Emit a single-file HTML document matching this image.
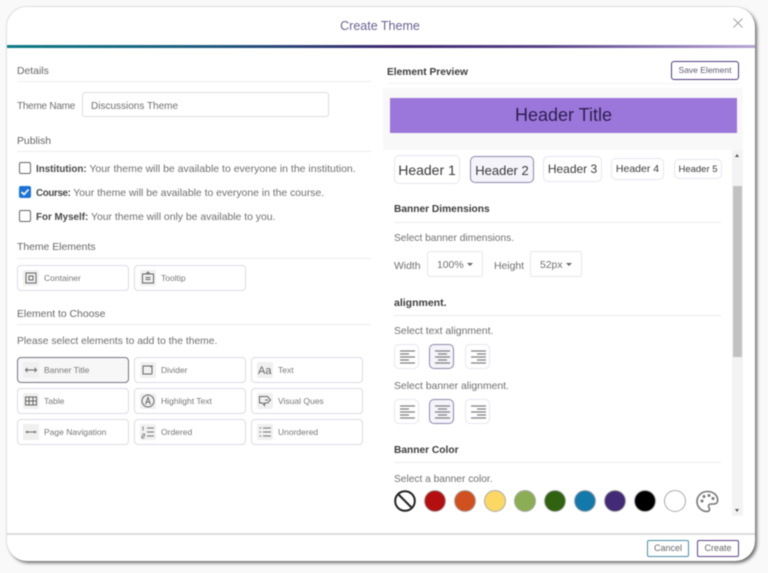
<!DOCTYPE html>
<html><head><meta charset="utf-8">
<style>
html,body{margin:0;padding:0;width:768px;height:573px;overflow:hidden;background:#f9f9f9;font-family:"Liberation Sans",sans-serif}
#wrap{position:absolute;left:0;top:0;width:768px;height:573px;filter:blur(.45px)}
#m{position:absolute;left:7px;top:7px;width:748px;height:554px;background:#fff;border-radius:20px;box-shadow:2px 2px 3px #6a6a6a,-1px -1px 1px #e6e6e6}
.a{position:absolute}
.t{position:absolute;white-space:nowrap;font-size:10.4px;line-height:14px;margin-top:2px;color:#6f6f6f}
.t b{font-size:9.8px;color:#484848}
.h{color:#666}
.b{font-weight:bold;color:#3c3c3c;font-size:10.2px}
.l{position:absolute;height:1px;background:#ececec}
.btn{position:absolute;box-sizing:border-box;width:112px;height:26px;border:1px solid #dcdbe6;border-radius:4px;background:#fff}
.btn .ic{position:absolute;left:5px;top:4px;width:16px;height:16px;background:#f0f0f0;border-radius:2px}
.btn .ic svg{display:block}
.btn span{position:absolute;left:26px;top:6px;font-size:8.5px;line-height:12px;color:#777;white-space:nowrap}
.hb{position:absolute;box-sizing:border-box;border:1px solid #e6e5ef;border-radius:5px;background:#fff;text-align:center;color:#3a3a3a;white-space:nowrap}
.al{position:absolute;box-sizing:border-box;width:25px;height:25px;border:1px solid #e6e5ef;border-radius:5px;background:#fff}
.al.s{background:#f4f4fa;border-color:#8d88ac}
.al svg{position:absolute;left:5px;top:4px}
.al path{stroke:#808080;stroke-width:1.3;fill:none}
.c{position:absolute;top:490px;width:22px;height:22px;border-radius:50%;box-sizing:border-box;border:1px solid #aaa}
.cb{position:absolute;left:19px;width:12px;height:12px;box-sizing:border-box;border:1.5px solid #666;border-radius:2px;background:#fff}
.sel{position:absolute;box-sizing:border-box;top:251px;height:26px;border:1px solid #e6e6e6;border-radius:3px;font-size:10.4px;line-height:27px;color:#6f6f6f;padding-left:9px}
.sel i{position:absolute;right:9px;top:11px;width:0;height:0;border-left:3.5px solid transparent;border-right:3.5px solid transparent;border-top:3.5px solid #666}
</style></head>
<body><div id="wrap">
<div id="m"></div>
<div class="t" style="left:280px;width:200px;text-align:center;top:16px;font-size:12.5px;line-height:16px;color:#6a6190">Create Theme</div>
<svg class="a" style="left:732px;top:17px" width="12" height="12"><path d="M1.5 1.5l9 9M10.5 1.5l-9 9" stroke="#a8a8a8" stroke-width="1.1" fill="none"/></svg>
<div class="a" style="left:7px;top:45px;width:748px;height:3px;background:linear-gradient(90deg,#0e7c86 0%,#1c5f80 25%,#3f2a70 52%,#5a4488 72%,#b9a6d6 100%)"></div>

<div class="t h" style="left:17px;top:63px">Details</div><div class="l" style="left:17px;top:81px;width:354px"></div>
<div class="t" style="left:17px;top:98px;font-size:10px;letter-spacing:-.25px">Theme Name</div>
<div class="a" style="left:82px;top:92px;width:247px;height:25px;box-sizing:border-box;border:1px solid #ddd;border-radius:3px"></div>
<div class="t" style="left:91px;top:98px;font-size:10px">Discussions Theme</div>
<div class="t h" style="left:17px;top:133px">Publish</div><div class="l" style="left:17px;top:151px;width:354px"></div>
<div class="cb" style="top:162px"></div>
<div class="t" style="left:36px;top:160px;font-size:10.5px"><b>Institution:</b> Your theme will be available to everyone in the institution.</div>
<div class="cb" style="top:186px;background:#1a73d8;border-color:#1a73d8"><svg class="a" style="left:-1px;top:-1px" width="12" height="12"><path d="M2.5 6l2.5 2.5 4.5-5" stroke="#fff" stroke-width="1.6" fill="none"/></svg></div>
<div class="t" style="left:36px;top:185px"><b style="letter-spacing:-.35px">Course:</b> Your theme will be available to everyone in the course.</div>
<div class="cb" style="top:210px"></div>
<div class="t" style="left:36px;top:209px"><b>For Myself:</b> Your theme will only be available to you.</div>
<div class="t h" style="left:17px;top:239px">Theme Elements</div><div class="l" style="left:17px;top:258px;width:354px"></div>

<div class="btn" style="left:17px;top:265px"><div class="ic"><svg width="16" height="16"><rect x="3" y="3" width="10" height="10" fill="none" stroke="#666"/><rect x="6" y="6" width="4" height="4" fill="none" stroke="#666"/></svg></div><span>Container</span></div>
<div class="btn" style="left:134px;top:265px"><div class="ic"><svg width="16" height="16"><rect x="2.5" y="4" width="11" height="9" fill="none" stroke="#666"/><path d="M6 4l2-2 2 2M5.500 7.500h5M5.500 9.500h5" stroke="#666" fill="none"/></svg></div><span>Tooltip</span></div>

<div class="t h" style="left:17px;top:306px">Element to Choose</div><div class="l" style="left:17px;top:324px;width:354px"></div>
<div class="t" style="left:17px;top:333px;font-size:10.3px">Please select elements to add to the theme.</div>

<div class="btn" style="left:17px;top:357px;border-color:#77757f;background:#f7f7f7"><div class="ic"><svg width="16" height="16"><path d="M2.500 8h11M4.500 6l-2 2 2 2M11.500 6l2 2-2 2" stroke="#666" fill="none" stroke-width=".9"/></svg></div><span>Banner Title</span></div>
<div class="btn" style="left:134px;top:357px"><div class="ic"><svg width="16" height="16"><path d="M13 4H3v8h9M10 4l2 1.500V12" stroke="#666" fill="none"/></svg></div><span>Divider</span></div>
<div class="btn" style="left:251px;top:357px"><div class="ic"><svg width="16" height="16"><text x="1" y="12" font-size="11" fill="#666" font-family="Liberation Sans">Aa</text></svg></div><span>Text</span></div>

<div class="btn" style="left:17px;top:388px"><div class="ic"><svg width="16" height="16"><path d="M2.500 4h11v8h-11zM2.500 8h11M6 4v8M10 4v8" stroke="#666" fill="none"/></svg></div><span>Table</span></div>
<div class="btn" style="left:134px;top:388px"><div class="ic"><svg width="16" height="16"><circle cx="8" cy="8" r="6" stroke="#666" fill="none"/><path d="M5.500 11.500L8 4.500l2.500 7M6.500 9h3" stroke="#666" fill="none"/></svg></div><span>Highlight Text</span></div>
<div class="btn" style="left:251px;top:388px"><div class="ic"><svg width="16" height="16"><path d="M2.500 3.500h8l3 3.500-3 3h-3v2.500l-2-2.500h-3zM8 7h3" stroke="#666" fill="none"/></svg></div><span>Visual Ques</span></div>

<div class="btn" style="left:17px;top:419px"><div class="ic"><svg width="16" height="16"><path d="M3 8h10M5 7l-2 1 2 1M11 7l2 1-2 1" stroke="#777" fill="none" stroke-width=".9"/></svg></div><span>Page Navigation</span></div>
<div class="btn" style="left:134px;top:419px"><div class="ic"><svg width="16" height="16"><path d="M7 4h7M7 8h7M7 12h7" stroke="#777" fill="none"/><path d="M3 2.500v4M2 10h2.500v2H2v2h2.500" stroke="#666" fill="none" stroke-width=".8"/></svg></div><span>Ordered</span></div>
<div class="btn" style="left:251px;top:419px"><div class="ic"><svg width="16" height="16"><path d="M6 4h8M6 8h8M6 12h8M2.500 4h1.500M2.500 8h1.500M2.500 12h1.500" stroke="#777" fill="none"/></svg></div><span>Unordered</span></div>

<div class="t b" style="left:387px;top:64px">Element Preview</div>
<div class="a" style="left:671px;top:61px;width:68px;height:19px;box-sizing:border-box;border:1.5px solid #4b3a7e;border-radius:3px;text-align:center;font-size:8.5px;line-height:16px;color:#5e5a70;white-space:nowrap">Save Element</div>
<div class="l" style="left:387px;top:83px;width:352px;background:#f3f3f3"></div>
<div class="a" style="left:383px;top:88px;width:360px;height:62px;background:#f8f8f8"></div>
<div class="a" style="left:390px;top:98px;width:347px;height:35px;background:#9c77db"></div>
<div class="t" style="left:390px;width:347px;text-align:center;top:101px;font-size:18px;line-height:24px;color:#2c1f4f">Header Title</div>

<div class="a" style="left:732px;top:150px;width:11px;height:366px;background:#f3f3f3"></div>
<div class="a" style="left:733px;top:186px;width:9px;height:171px;background:#c1c1c1"></div>
<div class="a" style="left:735px;top:154px;width:0;height:0;border-left:2.5px solid transparent;border-right:2.5px solid transparent;border-bottom:3px solid #555"></div>
<div class="a" style="left:735px;top:509px;width:0;height:0;border-left:2.5px solid transparent;border-right:2.5px solid transparent;border-top:3px solid #555"></div>

<div class="hb" style="left:394px;top:155px;width:66px;height:29px;font-size:14px;line-height:29px">Header 1</div>
<div class="hb" style="left:470px;top:156px;width:64px;height:27px;font-size:13px;line-height:28px;background:#f4f4fa;border-color:#8d88ac">Header 2</div>
<div class="hb" style="left:543px;top:156px;width:59px;height:26px;font-size:12px;line-height:24px">Header 3</div>
<div class="hb" style="left:611px;top:158px;width:53px;height:22px;font-size:10.5px;line-height:21px">Header 4</div>
<div class="hb" style="left:674px;top:159px;width:48px;height:20px;font-size:9.5px;line-height:19px">Header 5</div>

<div class="t b" style="left:394px;top:201px">Banner Dimensions</div><div class="l" style="left:394px;top:222px;width:327px"></div>
<div class="t" style="left:394px;top:230px;font-size:10.2px">Select banner dimensions.</div>
<div class="t" style="left:394px;top:258px">Width</div>
<div class="sel" style="left:427px;width:56px">100%<i></i></div>
<div class="t" style="left:494px;top:258px">Height</div>
<div class="sel" style="left:530px;width:52px">52px<i></i></div>
<div class="t b" style="left:394px;top:294px;font-size:10.5px">alignment.</div><div class="l" style="left:394px;top:315px;width:327px"></div>
<div class="t" style="left:394px;top:323px">Select text alignment.</div>

<div class="al" style="left:394px;top:344px"><svg width="15" height="16"><path d="M0 2h15M0 5h9M0 8h15M0 11h9M0 14h15"/></svg></div>
<div class="al s" style="left:429px;top:344px"><svg width="15" height="16"><path d="M0 2h15M3 5h9M0 8h15M3 11h9M0 14h15"/></svg></div>
<div class="al" style="left:465px;top:344px"><svg width="15" height="16"><path d="M0 2h15M6 5h9M0 8h15M6 11h9M0 14h15"/></svg></div>
<div class="t" style="left:394px;top:378px">Select banner alignment.</div>
<div class="al" style="left:394px;top:399px"><svg width="15" height="16"><path d="M0 2h15M0 5h9M0 8h15M0 11h9M0 14h15"/></svg></div>
<div class="al s" style="left:429px;top:399px"><svg width="15" height="16"><path d="M0 2h15M3 5h9M0 8h15M3 11h9M0 14h15"/></svg></div>
<div class="al" style="left:465px;top:399px"><svg width="15" height="16"><path d="M0 2h15M6 5h9M0 8h15M6 11h9M0 14h15"/></svg></div>

<div class="t b" style="left:394px;top:442px">Banner Color</div><div class="l" style="left:394px;top:462px;width:327px"></div>
<div class="t" style="left:394px;top:471px;font-size:10.2px">Select a banner color.</div>

<svg class="a" style="left:394px;top:490px" width="22" height="22"><circle cx="11" cy="11" r="9.8" fill="#fff" stroke="#222" stroke-width="2"/><path d="M4 4l14 14" stroke="#222" stroke-width="2"/></svg>
<div class="c" style="left:424px;background:#b30f10"></div>
<div class="c" style="left:454px;background:#d1501f"></div>
<div class="c" style="left:484px;background:#fbd863"></div>
<div class="c" style="left:514px;background:#8bae54"></div>
<div class="c" style="left:544px;background:#2f630f"></div>
<div class="c" style="left:574px;background:#1379aa"></div>
<div class="c" style="left:604px;background:#432a77"></div>
<div class="c" style="left:634px;background:#000"></div>
<div class="c" style="left:664px;background:#fff"></div>
<svg class="a" style="left:696px;top:490px" width="23" height="23"><path d="M11.500 1.500C5.500 1.500 1 6 1 11.500S5.500 21.500 11 21.500c1.800 0 2.500-1 2.500-2.200 0-1.500-1-2-1-3.200 0-1.300 1-2.100 2.300-2.100h3.200c2.200 0 3.700-1.600 3.700-3.700C21.700 5 17 1.500 11.500 1.500z" fill="#fff" stroke="#777" stroke-width="1.6"/><circle cx="6" cy="11" r="1.500" fill="#777"/><circle cx="8" cy="6.500" r="1.500" fill="#777"/><circle cx="13" cy="5.500" r="1.500" fill="#777"/><circle cx="17" cy="8.500" r="1.500" fill="#777"/></svg>

<div class="l" style="left:7px;top:533px;width:748px;height:2px;background:#dcdcdc"></div>
<div class="a" style="left:647px;top:540px;width:42px;height:17px;box-sizing:border-box;border:1.5px solid #4a8da4;border-radius:2px;text-align:center;font-size:9px;line-height:15px;color:#666">Cancel</div>
<div class="a" style="left:697px;top:540px;width:42px;height:17px;box-sizing:border-box;border:1.5px solid #5a4488;border-radius:2px;text-align:center;font-size:9px;line-height:15px;color:#666">Create</div>
</div></body></html>
